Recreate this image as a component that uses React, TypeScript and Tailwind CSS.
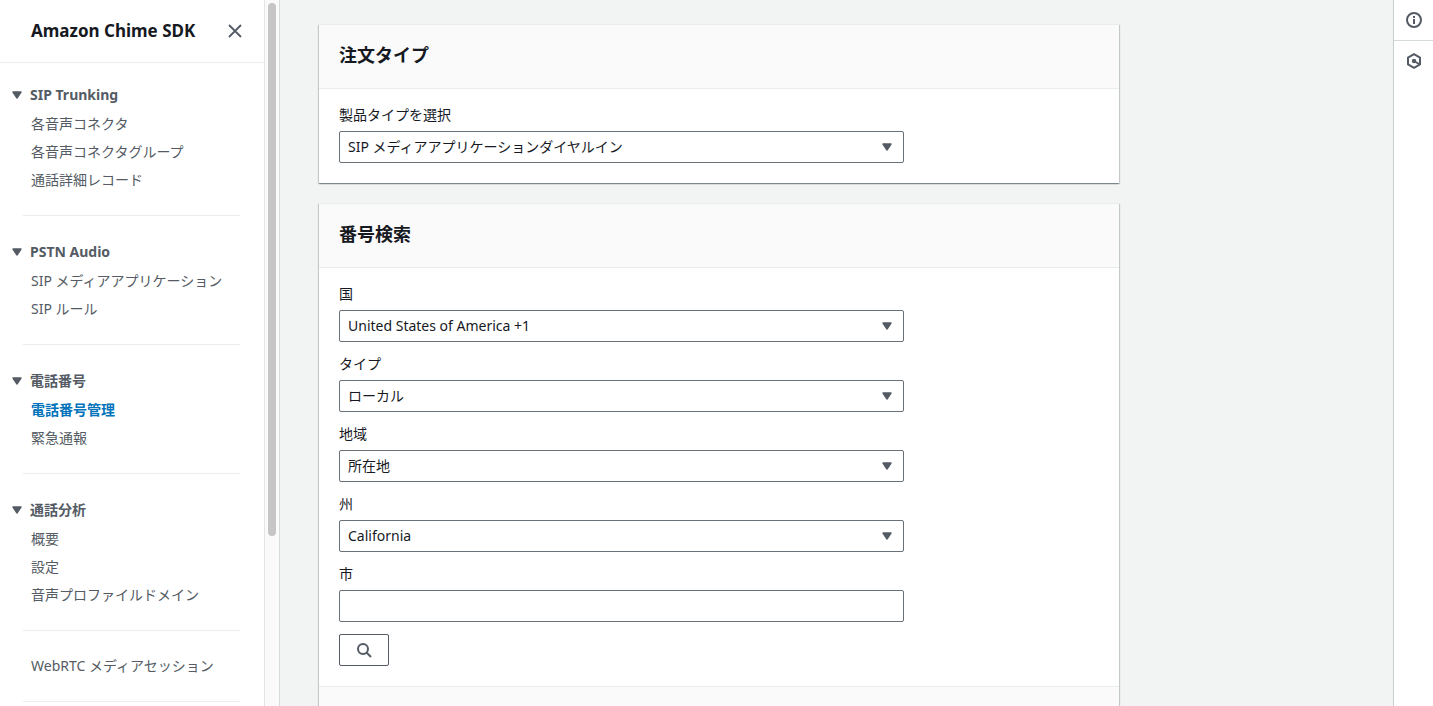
import { useState, type ReactNode } from "react";

type NavItem = { label: string; active?: boolean };
type NavSection = { title: string; items: NavItem[] };

const sections: NavSection[] = [
  {
    title: "SIP Trunking",
    items: [
      { label: "各音声コネクタ" },
      { label: "各音声コネクタグループ" },
      { label: "通話詳細レコード" },
    ],
  },
  {
    title: "PSTN Audio",
    items: [{ label: "SIP メディアアプリケーション" }, { label: "SIP ルール" }],
  },
  {
    title: "電話番号",
    items: [{ label: "電話番号管理", active: true }, { label: "緊急通報" }],
  },
  {
    title: "通話分析",
    items: [
      { label: "概要" },
      { label: "設定" },
      { label: "音声プロファイルドメイン" },
    ],
  },
];

function Caret({ className = "" }: { className?: string }) {
  return (
    <svg viewBox="0 0 10 8" className={`h-2 w-[10px] ${className}`} aria-hidden="true">
      <path
        d="M1 1h8L5 7z"
        fill="#545b64"
        stroke="#545b64"
        strokeWidth="1.4"
        strokeLinejoin="round"
      />
    </svg>
  );
}

function Section({ title, items }: NavSection) {
  const [open, setOpen] = useState(true);

  return (
    <section className="pt-[25px] pb-[21px]">
      <h3>
        <button
          onClick={() => setOpen(!open)}
          aria-expanded={open}
          className="mb-1 flex items-center pl-3 font-bold leading-[22px] text-[#545b64]"
        >
          <Caret className={open ? "mr-2" : "mr-2 -rotate-90"} />
          {title}
        </button>
      </h3>
      {open && (
        <ul className="pl-[31px]">
          {items.map((item) => (
            <li key={item.label} className="leading-7">
              <a
                href="#"
                className={item.active ? "font-bold text-[#0073bb]" : "text-[#545b64]"}
              >
                {item.label}
              </a>
            </li>
          ))}
        </ul>
      )}
    </section>
  );
}

function Divider() {
  return <hr className="mr-6 ml-[23px] border-t border-[#eaeded]" />;
}

function Sidebar() {
  return (
    <aside className="flex w-[280px] shrink-0 border-r border-[#d5dbdb] bg-white">
      <div className="min-w-0 flex-1 overflow-hidden">
        <header className="flex items-center justify-between border-b border-[#eaeded] py-[17px] pr-[19px] pl-[31px]">
          <h2 className="text-[17px] font-bold leading-7 text-[#16191f]">
            <a href="#">Amazon Chime SDK</a>
          </h2>
          <button aria-label="閉じる" className="p-0.5">
            <svg viewBox="0 0 16 16" className="h-4 w-4" fill="none" stroke="#545b64" strokeWidth="1.8">
              <path d="M2 2l12 12M14 2L2 14" />
            </svg>
          </button>
        </header>
        <nav className="-mt-1">
          {sections.map((section, i) => (
            <div key={section.title}>
              {i > 0 && <Divider />}
              <Section {...section} />
            </div>
          ))}
          <Divider />
          <a href="#" className="block py-[21px] pl-[31px] leading-7 text-[#545b64]">
            WebRTC メディアセッション
          </a>
          <Divider />
        </nav>
      </div>
      <div className="w-[15px] border-l border-[#e4e4e4] bg-[#fafafa] pt-[3px] pl-[3px]">
        <div className="h-[533px] w-2 rounded-full bg-[#c6c6c6]" />
      </div>
    </aside>
  );
}

function Panel({ title, children, footer }: { title: string; children: ReactNode; footer?: boolean }) {
  return (
    <section className="border-t border-[#eaeded] bg-white shadow-[0_1px_1px_0_rgba(0,28,36,0.3),1px_1px_1px_0_rgba(0,28,36,0.15),-1px_1px_1px_0_rgba(0,28,36,0.15)]">
      <div className="border-b border-[#eaeded] bg-[#fafafa] px-5 pt-4 pb-[19px]">
        <h2 className="text-lg font-bold leading-7">{title}</h2>
      </div>
      <div className="flex flex-col gap-3 px-5 pt-4 pb-5">{children}</div>
      {footer && <div className="h-16 border-t border-[#eaeded] bg-[#fafafa]" />}
    </section>
  );
}

function SelectField({ id, label, value }: { id: string; label: string; value: string }) {
  return (
    <div className="max-w-[565px]">
      <label htmlFor={id} className="mb-1.5 block leading-5">
        {label}
      </label>
      <div className="relative">
        <select
          id={id}
          defaultValue={value}
          className="block h-8 w-full appearance-none rounded-xs border border-[#687078] bg-white pr-8 pl-2"
        >
          <option>{value}</option>
        </select>
        <Caret className="pointer-events-none absolute top-3 right-3" />
      </div>
    </div>
  );
}

function ToolRail() {
  return (
    <aside className="flex w-10 shrink-0 flex-col border-l border-[#c9cfcf] bg-white">
      <button aria-label="情報" className="flex h-[41px] items-center justify-center border-b border-[#d5dbdb]">
        <svg viewBox="0 0 16 16" className="h-4 w-4" fill="none" stroke="#545b64" strokeWidth="2">
          <circle cx="8" cy="8" r="7" />
          <path d="M8 4v2M8 7v5" />
        </svg>
      </button>
      <button aria-label="設定" className="flex h-10 items-center justify-center">
        <svg viewBox="0 0 16 16" className="h-4 w-4" fill="none" stroke="#545b64" strokeWidth="2">
          <path d="M8 1.200l6 3.400v6.800l-6 3.400-6-3.400V4.600z" strokeLinejoin="round" />
          <circle cx="8" cy="8" r="2.200" fill="#545b64" stroke="none" />
          <path d="M8 8l5 3" />
        </svg>
      </button>
    </aside>
  );
}

export default function App() {
  return (
    <div className="flex h-screen overflow-hidden bg-[#f2f3f3] font-['Noto_Sans','Noto_Sans_CJK_JP',sans-serif] text-sm text-[#16191f]">
      <Sidebar />
      <main className="min-w-0 flex-1 overflow-hidden pt-6 pr-5 pl-[39px]">
        <div className="flex max-w-[800px] flex-col gap-5">
          <Panel title="注文タイプ">
            <SelectField
              id="product"
              label="製品タイプを選択"
              value="SIP メディアアプリケーションダイヤルイン"
            />
          </Panel>
          <Panel title="番号検索" footer>
            <SelectField id="country" label="国" value="United States of America +1" />
            <SelectField id="type" label="タイプ" value="ローカル" />
            <SelectField id="area" label="地域" value="所在地" />
            <SelectField id="state" label="州" value="California" />
            <div className="max-w-[565px]">
              <label htmlFor="city" className="mb-1.5 block leading-5">
                市
              </label>
              <input
                id="city"
                type="text"
                className="block h-8 w-full rounded-xs border border-[#687078] bg-white px-2"
              />
            </div>
            <button
              aria-label="検索"
              className="flex h-8 w-[50px] items-center justify-center rounded-xs border border-[#545b64] bg-white"
            >
              <svg viewBox="0 0 16 16" className="h-4 w-4" fill="none" stroke="#545b64" strokeWidth="2">
                <circle cx="7" cy="7" r="5" />
                <path d="M10.500 10.500L15 15" />
              </svg>
            </button>
          </Panel>
        </div>
      </main>
      <ToolRail />
    </div>
  );
}
